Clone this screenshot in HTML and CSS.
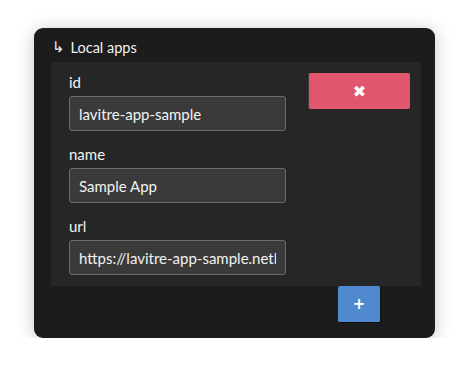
FILE: index.html
```html
<!DOCTYPE html>
<html lang="en">
<head>
    <meta charset="UTF-8">
    <title>Local apps</title>
    <link rel="stylesheet" href="styles.css">
</head>
<body>
    <div class="window">
        <div class="window-title"><span class="arrow">↳</span> Local apps</div>

        <div class="app-panel">
            <div class="app-fields">
                <div class="field">
                    <label>id</label>
                    <input type="text" value="lavitre-app-sample">
                </div>
                <div class="field">
                    <label>name</label>
                    <input type="text" value="Sample App">
                </div>
                <div class="field">
                    <label>url</label>
                    <input type="text" value="https://lavitre-app-sample.netlify.app">
                </div>
            </div>
            <button class="btn-remove">✖</button>
        </div>

        <div class="actions">
            <button class="btn-add">+</button>
        </div>
    </div>
</body>
</html>
```

FILE: styles.css
```css
body {
    margin: 0;
    background-color: #ffffff;
    font-family: "Lato", "Open Sans", sans-serif;
    color: #f2f2f2;
}
.window {
    margin: 28px 0 0 34px;
    width: 401px;
    height: 310px;
    box-sizing: border-box;
    background-color: #1c1c1c;
    border-radius: 9px;
    box-shadow: 0 2px 18px rgba(0,0,0,0.22);
    padding: 0 14px 0 17px;
}
.window-title {
    height: 34px;
    display: flex;
    align-items: center;
    padding-left: 1px;
    padding-top: 4px;
    box-sizing: border-box;
    font-size: 14.5px;
}
.arrow {
    font-family: "DejaVu Sans", sans-serif;
    font-size: 15px;
    margin-right: 6px;
}
.app-panel {
    display: flex;
    align-items: flex-start;
    gap: 22px;
    background-color: #262626;
    padding: 11px 11px 11px 18px;
}
.app-fields {
    width: 217px;
}
.field + .field {
    margin-top: 14px;
}
.field label {
    display: block;
    font-size: 15px;
    line-height: 18px;
    margin-bottom: 5px;
}
.field input {
    display: block;
    width: 100%;
    height: 35px;
    box-sizing: border-box;
    background-color: #3a3a3a;
    border: 1px solid #6c6c6c;
    border-radius: 3px;
    color: #f2f2f2;
    font-family: inherit;
    font-size: 15px;
    padding: 0 9px;
    outline: none;
}
.btn-remove {
    width: 102px;
    height: 36px;
    background-color: #e0566e;
    border: none;
    border-left: 1px solid #3b3b3b;
    border-radius: 2px;
    color: #ffffff;
    font-family: "DejaVu Sans", sans-serif;
    font-size: 16px;
    font-weight: bold;
}
.actions {
    display: flex;
    justify-content: flex-end;
    padding-right: 40px;
}
.btn-add {
    width: 43px;
    height: 37px;
    background-color: #5189cf;
    border: none;
    border-right: 1px solid #111;
    border-bottom: 1px solid #111;
    border-radius: 2px;
    color: #ffffff;
    font-family: "DejaVu Sans", sans-serif;
    font-size: 15px;
    font-weight: bold;
    padding: 0;
}
```
